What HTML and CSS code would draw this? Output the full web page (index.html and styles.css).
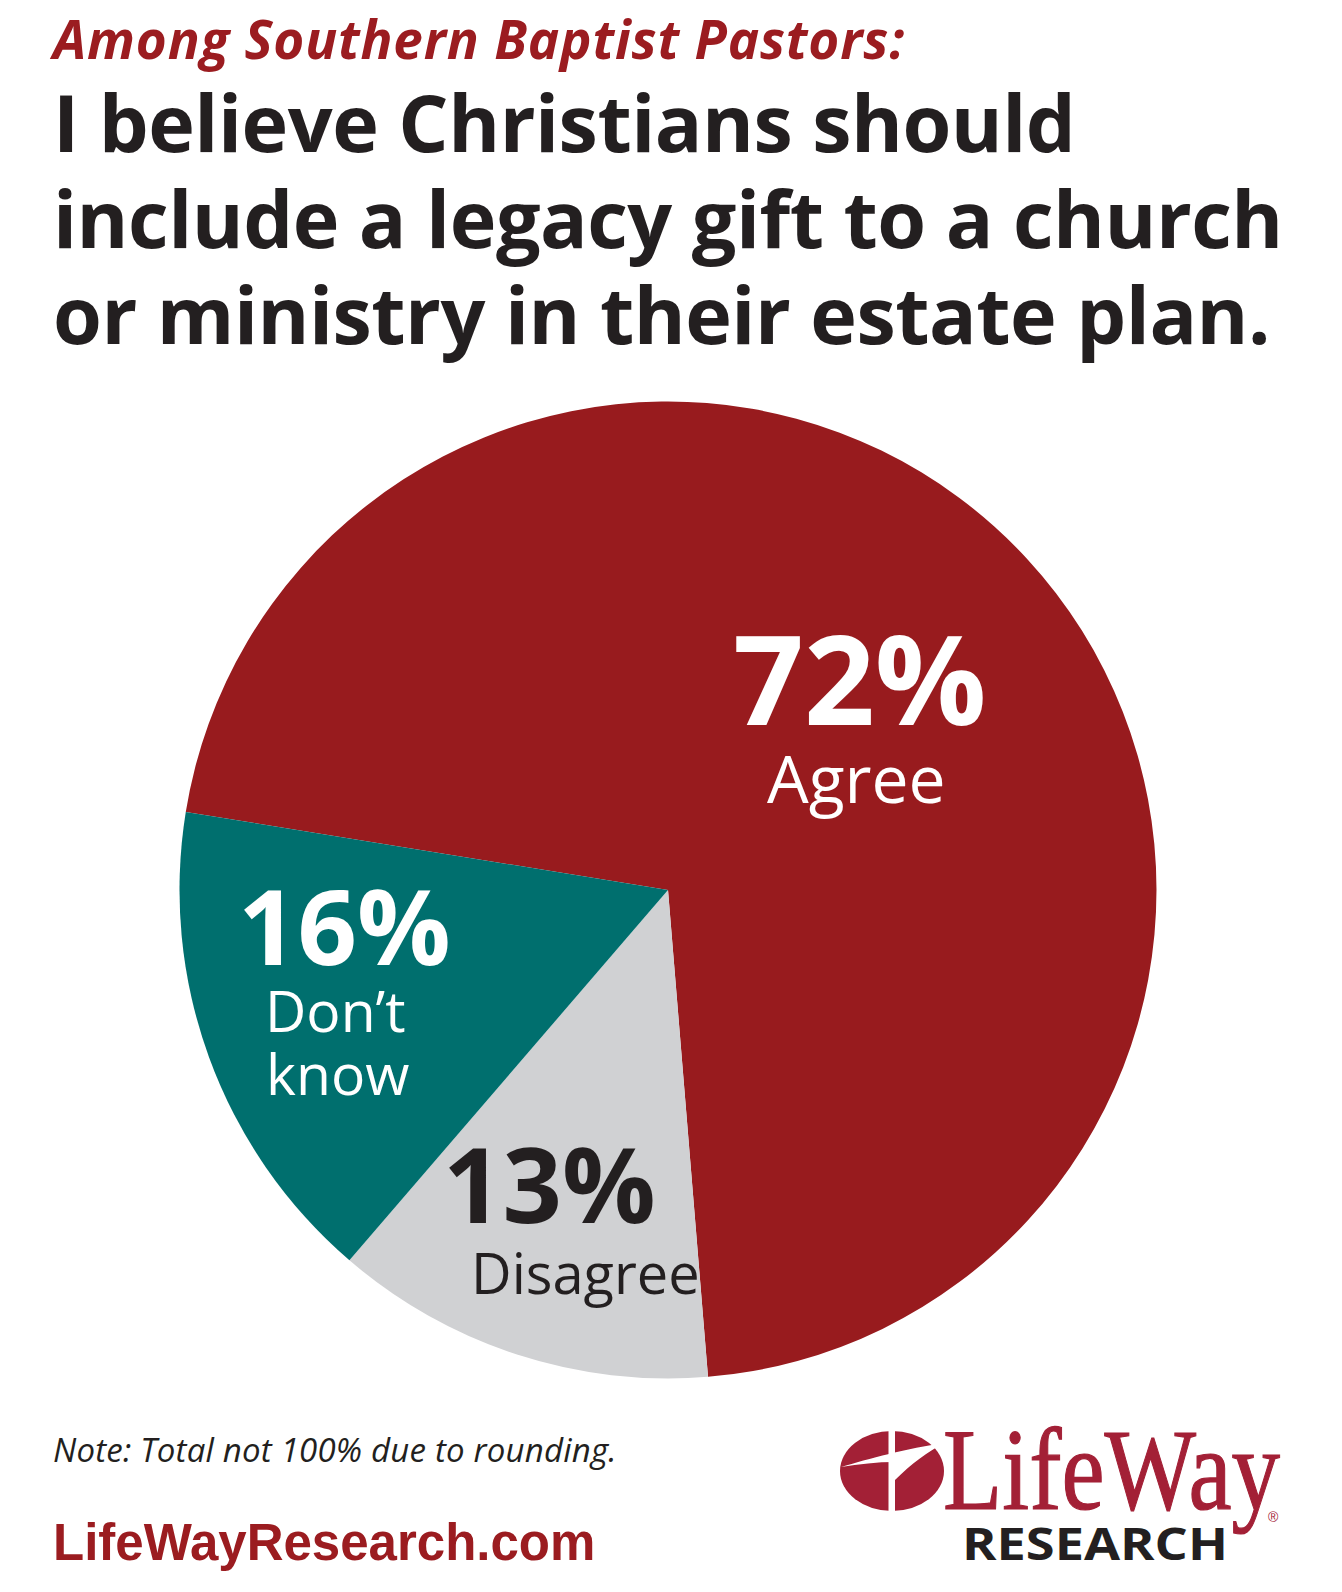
FILE: index.html
```html
<!DOCTYPE html>
<html lang="en">
<head>
<meta charset="utf-8">
<title>Among Southern Baptist Pastors</title>
<link rel="stylesheet" href="styles.css">
</head>
<body>
<div class="page">
  <header class="header">
    <div class="kicker">Among Southern Baptist Pastors:</div>
    <h1 class="title">I believe Christians should<br>include a legacy gift to a church<br>or ministry in their estate plan.</h1>
  </header>

  <section class="chart">
    <svg class="pie" width="1342" height="1040" viewBox="0 0 1342 1040" xmlns="http://www.w3.org/2000/svg">
      <path class="slice-red" d="M 668 528 L 185.78 449.9 A 488.5 488.5 0 1 1 708.01 1014.86 Z"/>
      <path class="slice-gray" d="M 668 528 L 708.01 1014.86 A 488.5 488.5 0 0 1 349.45 898.33 Z"/>
      <path class="slice-teal" d="M 668 528 L 349.45 898.33 A 488.5 488.5 0 0 1 185.78 449.9 Z"/>

      <text class="pct pct-big light" x="733" y="363">72%</text>
      <text class="lbl lbl-agree light" x="767" y="441">Agree</text>

      <text class="pct light" x="238" y="603">16%</text>
      <text class="lbl light" x="265" y="670">Don’t</text>
      <text class="lbl light" x="266" y="733">know</text>

      <text class="pct dark" x="443" y="861">13%</text>
      <text class="lbl lbl-dis dark" x="471" y="932">Disagree</text>
    </svg>
  </section>

  <footer class="footer">
    <div class="foot-left">
      <div class="note">Note: Total not 100% due to rounding.</div>
      <div class="url">LifeWayResearch.com</div>
    </div>
    <svg class="logo" width="450" height="165" viewBox="0 0 450 165" xmlns="http://www.w3.org/2000/svg">
      <ellipse class="logo-red" cx="54" cy="67" rx="52" ry="40"/>
      <rect class="logo-white" x="50.5" y="24" width="6.5" height="88"/>
      <path class="logo-white" d="M 3 63 C 30 55, 70 44, 106 39 C 91 47, 73 60, 57 76 L 57 58 C 39 58, 21 60, 3 63 Z"/>
      <text class="lw" x="105" y="105" textLength="337" lengthAdjust="spacingAndGlyphs">LifeWay</text>
      <text class="reg" x="430" y="118">®</text>
      <text class="research" x="124" y="156" textLength="266" lengthAdjust="spacingAndGlyphs">RESEARCH</text>
    </svg>
  </footer>
</div>
</body>
</html>
```
FILE: styles.css
```css
html, body {
  margin: 0;
  padding: 0;
  background: #ffffff;
}

.page {
  width: 1342px;
  height: 1592px;
  overflow: hidden;
  background: #ffffff;
  font-family: "Open Sans", "Noto Sans", sans-serif;
  color: #231f20;
}

.header {
  padding: 8px 0 0 53px;
}

.kicker {
  font-size: 53px;
  line-height: 61px;
  font-weight: 700;
  font-style: italic;
  color: #9b1c20;
  letter-spacing: 0.8px;
}

.title {
  margin: 5px 0 0 0;
  font-size: 79px;
  line-height: 96px;
  font-weight: 700;
  color: #231f20;
  letter-spacing: -0.5px;
}

.chart {
  height: 1040px;
}

.pie {
  display: block;
}

.slice-red { fill: #981b1e; }
.slice-gray { fill: #d0d1d3; }
.slice-teal { fill: #006f6e; }

.pct {
  font-family: "Open Sans", "Noto Sans", sans-serif;
  font-weight: 700;
  font-size: 104px;
}

.pct-big {
  font-size: 124px;
}

.lbl {
  font-family: "Open Sans", "Noto Sans", sans-serif;
  font-weight: 400;
  font-size: 57px;
}

.lbl-agree { font-size: 66px; }
.lbl-dis { font-size: 56px; }

.light { fill: #ffffff; }
.dark { fill: #231f20; }

.footer {
  display: flex;
  align-items: flex-start;
  padding-left: 53px;
}

.foot-left {
  width: 785px;
  padding-top: 28px;
}

.note {
  font-size: 33px;
  line-height: 40px;
  font-style: italic;
  font-weight: 400;
  color: #231f20;
  letter-spacing: 0.2px;
}

.url {
  margin-top: 45px;
  font-family: "Liberation Sans", Arial, sans-serif;
  font-weight: 700;
  font-size: 51px;
  line-height: 56px;
  color: #9b1c20;
}

.logo {
  display: block;
  margin-top: 2px;
}

.logo-red { fill: #a32036; }
.logo-white { fill: #ffffff; }

.lw {
  font-family: "Liberation Serif", "Times New Roman", serif;
  font-size: 117px;
  fill: #a32036;
  stroke: #a32036;
  stroke-width: 1.2px;
}

.reg {
  font-family: "Liberation Sans", Arial, sans-serif;
  font-size: 14px;
  fill: #a32036;
}

.research {
  font-family: "Open Sans", "Noto Sans", sans-serif;
  font-weight: 700;
  font-size: 44px;
  fill: #231f20;
}
```
